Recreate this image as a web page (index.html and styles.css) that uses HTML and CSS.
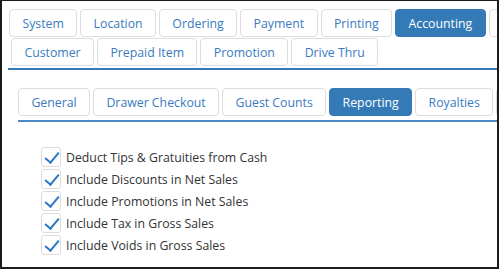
FILE: index.html
```html
<!DOCTYPE html>
<html lang="en">
<head>
    <meta charset="UTF-8">
    <title>Accounting - Reporting</title>
    <link rel="stylesheet" href="styles.css">
</head>
<body>
    <div class="frame">
        <!-- Main tabs -->
        <div class="main-tabs">
            <div class="tab-row first">
                <span class="tab">System</span>
                <span class="tab">Location</span>
                <span class="tab">Ordering</span>
                <span class="tab">Payment</span>
                <span class="tab">Printing</span>
                <span class="tab active">Accounting</span>
                <span class="tab more"></span>
            </div>
            <div class="tab-row second">
                <span class="tab">Customer</span>
                <span class="tab">Prepaid Item</span>
                <span class="tab">Promotion</span>
                <span class="tab">Drive Thru</span>
            </div>
        </div>

        <!-- Sub tabs -->
        <div class="sub-tabs">
            <div class="tab-row">
                <span class="tab">General</span>
                <span class="tab">Drawer Checkout</span>
                <span class="tab">Guest Counts</span>
                <span class="tab active">Reporting</span>
                <span class="tab">Royalties</span>
                <span class="tab more"></span>
            </div>
        </div>

        <!-- Options -->
        <ul class="options">
            <li><span class="check"></span>Deduct Tips &amp; Gratuities from Cash</li>
            <li><span class="check"></span>Include Discounts in Net Sales</li>
            <li><span class="check"></span>Include Promotions in Net Sales</li>
            <li><span class="check"></span>Include Tax in Gross Sales</li>
            <li><span class="check"></span>Include Voids in Gross Sales</li>
        </ul>
    </div>
</body>
</html>
```

FILE: styles.css
```css
body {
    margin: 0;
    padding: 0;
    font-family: "Open Sans", Arial, sans-serif;
    background-color: #ffffff;
}
.frame {
    width: 499px;
    height: 269px;
    box-sizing: border-box;
    border: 2px solid #1c1c1c;
    border-top-width: 1px;
    overflow: hidden;
}
.tab-row {
    display: flex;
    gap: 3px;
    white-space: nowrap;
}
.tab {
    flex: none;
    height: 28px;
    box-sizing: border-box;
    padding: 0 12.4px;
    display: flex;
    align-items: center;
    justify-content: center;
    border: 1px solid #dddddd;
    border-radius: 4px;
    font-size: 12.3px;
    color: #3a7bc0;
}
.tab.more {
    width: 40px;
}
.tab.active {
    background-color: #337ab7;
    border-color: #337ab7;
    color: #ffffff;
}
.main-tabs {
    margin-left: 6px;
    border-bottom: 2px solid #337ab7;
    padding-bottom: 2px;
}
.tab-row.first {
    padding: 8px 0 0 1px;
}
.tab-row.second {
    padding: 1px 0 0 3px;
}
.sub-tabs {
    margin: 18px 0 0 16px;
    border-bottom: 2px solid #4a89c3;
    padding-bottom: 4px;
}
.options {
    list-style: none;
    margin: 0;
    padding: 24px 0 0 39px;
}
.options li {
    display: flex;
    align-items: center;
    height: 22px;
    gap: 5px;
    font-size: 12.3px;
    color: #333333;
}
.check {
    width: 20px;
    height: 20px;
    box-sizing: border-box;
    border: 1px solid #dcdcdc;
    border-radius: 3px;
    position: relative;
}
.check::after {
    content: "";
    position: absolute;
    left: 6px;
    top: 1px;
    width: 6px;
    height: 12px;
    border: solid #2a76c6;
    border-width: 0 2.5px 2.5px 0;
    transform: rotate(40deg);
}
```
